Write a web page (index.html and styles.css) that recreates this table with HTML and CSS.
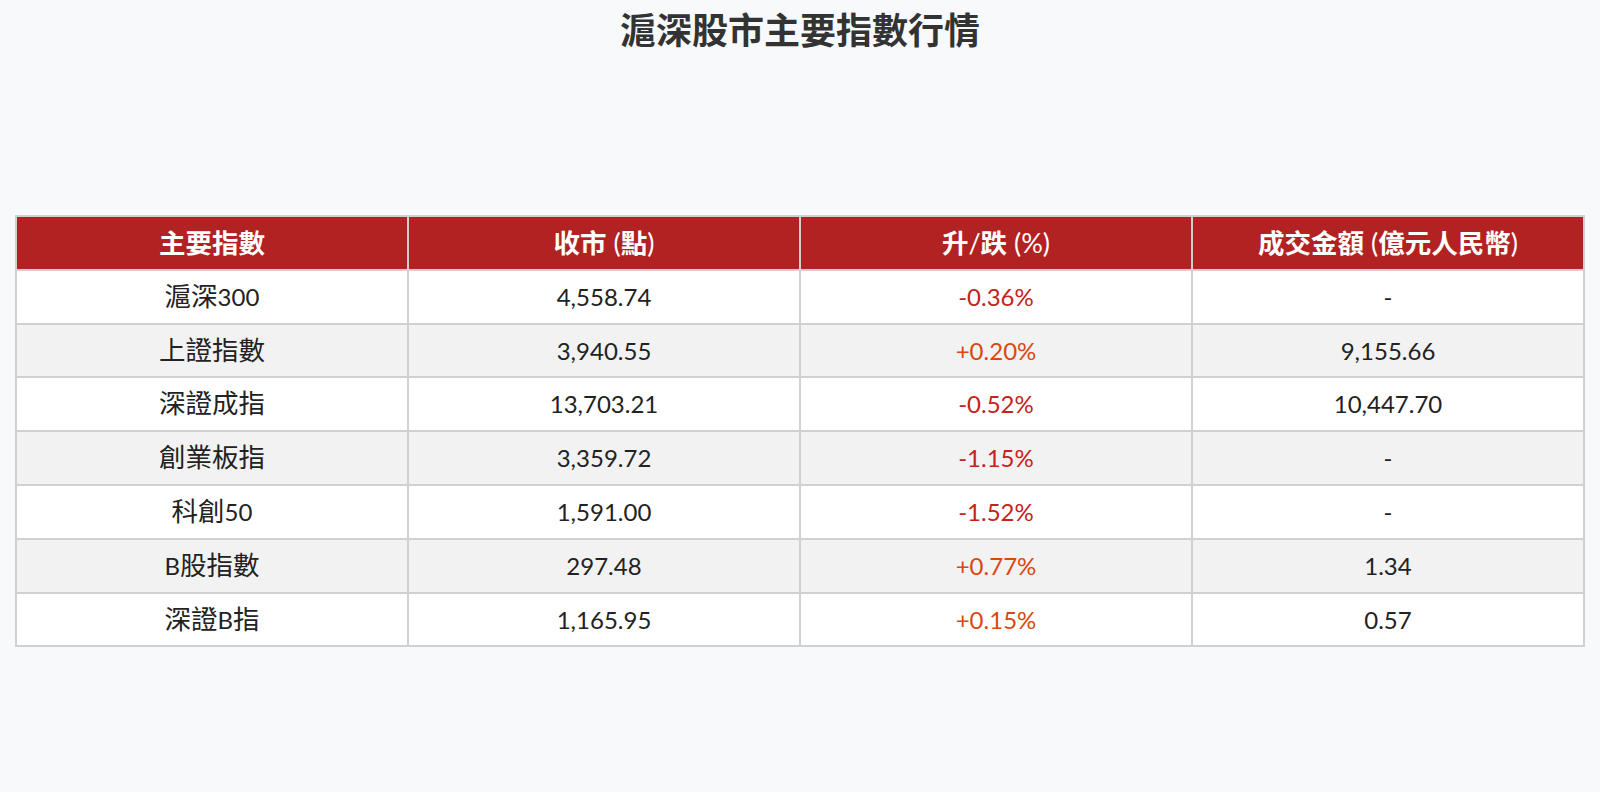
FILE: index.html
```html
<!DOCTYPE html>
<html lang="zh-Hant">
<head>
<meta charset="utf-8">
<title>滬深股市主要指數行情</title>
<link rel="stylesheet" href="styles.css">
</head>
<body>
<div class="page">
  <h1 class="title">滬深股市主要指數行情</h1>
  <table class="quotes">
    <thead>
      <tr>
        <th><span class="zh">主要指數</span></th>
        <th><span class="zh">收市</span> (<span class="zh">點</span>)</th>
        <th><span class="zh">升</span>/<span class="zh">跌</span> (%)</th>
        <th><span class="zh">成交金額</span> (<span class="zh">億元人民幣</span>)</th>
      </tr>
    </thead>
    <tbody>
      <tr><td><span class="zh">滬深</span>300</td><td>4,558.74</td><td class="down">-0.36%</td><td>-</td></tr>
      <tr><td><span class="zh">上證指數</span></td><td>3,940.55</td><td class="up">+0.20%</td><td>9,155.66</td></tr>
      <tr><td><span class="zh">深證成指</span></td><td>13,703.21</td><td class="down">-0.52%</td><td>10,447.70</td></tr>
      <tr><td><span class="zh">創業板指</span></td><td>3,359.72</td><td class="down">-1.15%</td><td>-</td></tr>
      <tr><td><span class="zh">科創</span>50</td><td>1,591.00</td><td class="down">-1.52%</td><td>-</td></tr>
      <tr><td>B<span class="zh">股指數</span></td><td>297.48</td><td class="up">+0.77%</td><td>1.34</td></tr>
      <tr><td><span class="zh">深證</span>B<span class="zh">指</span></td><td>1,165.95</td><td class="up">+0.15%</td><td>0.57</td></tr>
    </tbody>
  </table>
</div>
</body>
</html>
```
FILE: styles.css
```css
html, body {
  margin: 0;
  padding: 0;
  background: #f8f9fa;
}
body {
  font-family: Lato, "Noto Sans CJK TC", sans-serif;
  color: #222;
}
.page {
  padding: 0 15px;
}
.title {
  margin: 0;
  padding-top: 6px;
  height: 215px;
  box-sizing: border-box;
  text-align: center;
  font-size: 36px;
  line-height: 44px;
  font-weight: 700;
  color: #333;
  font-family: "Noto Sans CJK TC", sans-serif;
}
.quotes {
  width: 100%;
  border-collapse: collapse;
  table-layout: fixed;
  border: 2px solid #d0d0d0;
  background: #fff;
}
.quotes th,
.quotes td {
  border: 2px solid #d0d0d0;
  text-align: center;
  padding: 12px 0;
  height: 27.8px;
  line-height: 27.8px;
  font-size: 24px;
  font-weight: 400;
}
.quotes th {
  background: #b22222;
  color: #fff;
  font-size: 27px;
}
.zh {
  font-family: "Noto Sans CJK TC", sans-serif;
  font-size: 26.5px;
  line-height: 0;
}
.quotes td .zh {
  font-weight: 400;
}
.quotes th .zh {
  font-weight: 700;
}
.quotes tbody tr:nth-child(even) td {
  background: #f2f2f2;
}
.quotes td.down {
  color: #c4221c;
}
.quotes td.up {
  color: #d9480f;
}
```
